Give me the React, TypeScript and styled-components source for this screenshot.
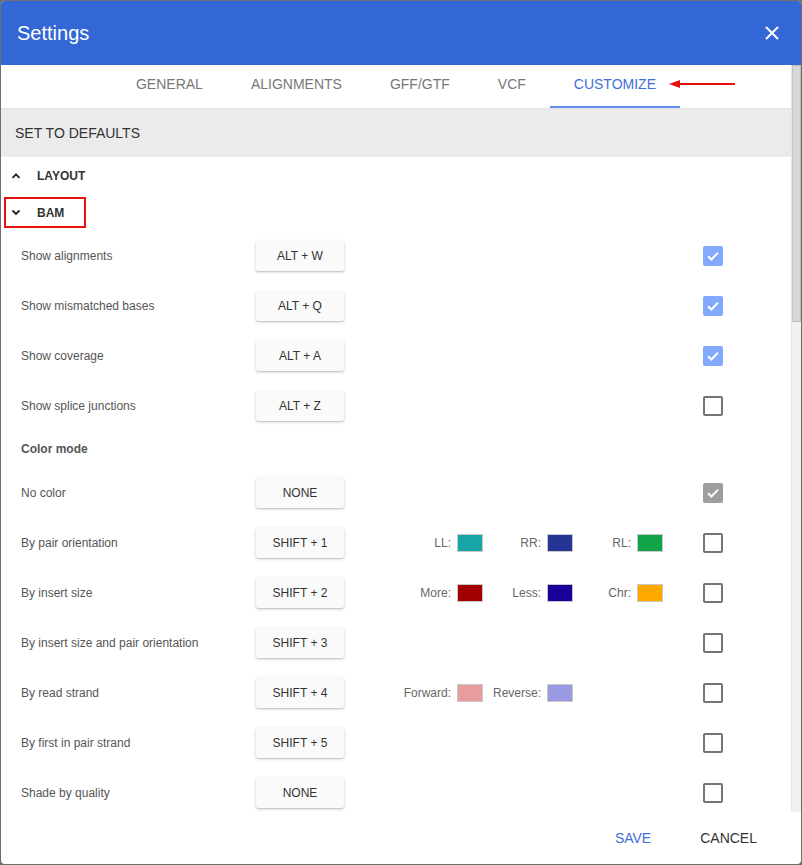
import React from "react";
import styled, { createGlobalStyle } from "styled-components";

const Global = createGlobalStyle`
  html, body { margin: 0; padding: 0; }
  body {
    background: #6e6e6e;
    font-family: "Liberation Sans", Arial, sans-serif;
    width: 802px;
    height: 865px;
    overflow: hidden;
  }
`;

const Dialog = styled.div`
  margin: 1px 0 0 1px;
  width: 800px;
  height: 863px;
  background: #fff;
  border-radius: 4px;
  overflow: hidden;
  display: flex;
  flex-direction: column;
  box-sizing: border-box;
`;

const Header = styled.div`
  height: 64px;
  flex: none;
  background: #3367d6;
  display: flex;
  align-items: center;
  justify-content: space-between;
  padding: 0 20px 0 16px;
  color: #fff;
`;

const Title = styled.div`
  font-size: 20px;
  line-height: 1;
`;

const CloseBtn = styled.button`
  border: 0;
  background: none;
  padding: 0;
  width: 18px;
  height: 18px;
  display: flex;
  align-items: center;
  justify-content: center;
`;

const Body = styled.div`
  flex: 1;
  min-height: 0;
  display: flex;
`;

const Content = styled.div`
  flex: 1;
  min-width: 0;
  overflow: hidden;
`;

const ScrollTrack = styled.div`
  width: 10px;
  flex: none;
  background: #f1f1f1;
  border-left: 1px solid #e6e6e6;
  box-sizing: border-box;
`;

const ScrollThumb = styled.div`
  height: 257px;
  background: #d7d7d7;
  border: 1px solid #bdbdbd;
  border-left-color: #c4c4c4;
  box-sizing: border-box;
`;

const Tabs = styled.div`
  height: 43px;
  border-bottom: 1px solid #e2e2e2;
  display: flex;
  justify-content: center;
`;

const Tab = styled.div<{ $active?: boolean }>`
  padding: 0 24px 5px;
  display: flex;
  align-items: center;
  font-size: 14px;
  color: ${(p) => (p.$active ? "#3f6fd8" : "#777")};
  box-shadow: ${(p) => (p.$active ? "inset 0 -2px 0 #5f90f2" : "none")};
  position: relative;
`;

const Arrow = styled.svg`
  position: absolute;
  left: 119px;
  top: 14px;
`;

const DefaultsBar = styled.div`
  height: 48px;
  background: #ebebeb;
  display: flex;
  align-items: center;
  padding-left: 14px;
  font-size: 14px;
  color: #333;
`;

const SectionHead = styled.div<{ $marked?: boolean }>`
  display: flex;
  align-items: center;
  height: ${(p) => (p.$marked ? "31px" : "37px")};
  margin: ${(p) => (p.$marked ? "3px 0 3px 3px" : "0")};
  width: ${(p) => (p.$marked ? "82px" : "auto")};
  padding-left: ${(p) => (p.$marked ? "5px" : "10px")};
  border: ${(p) => (p.$marked ? "2px solid #e8100f" : "0")};
  box-sizing: border-box;
  font-size: 12px;
  font-weight: bold;
  color: #333;
`;

const ChevronBox = styled.span`
  width: 26px;
  display: flex;
  align-items: center;
`;

const Row = styled.div`
  height: 50px;
  display: grid;
  grid-template-columns: 235px 88px 1fr 20px;
  align-items: center;
  padding: 0 68px 0 20px;
`;

const SubTitle = styled.div`
  height: 37px;
  display: flex;
  align-items: center;
  padding: 0 0 2px 20px;
  box-sizing: border-box;
  font-size: 12px;
  font-weight: bold;
  color: #555;
`;

const Label = styled.div`
  font-size: 12px;
  color: #555;
`;

const KeyButton = styled.div`
  height: 30px;
  background: #fafafa;
  border-radius: 2px;
  box-shadow: 0 1px 3px rgba(0, 0, 0, 0.22), 0 1px 1px rgba(0, 0, 0, 0.08);
  display: flex;
  align-items: center;
  justify-content: center;
  font-size: 12px;
  color: #333;
`;

const Swatches = styled.div<{ $pad: number }>`
  display: flex;
  justify-content: flex-end;
  padding-right: ${(p) => p.$pad}px;
`;

const SwatchGroup = styled.div`
  width: 90px;
  display: flex;
  justify-content: flex-end;
  align-items: center;
  gap: 6px;
  font-size: 12px;
  color: #666;
`;

const Swatch = styled.span<{ $c: string }>`
  width: 24px;
  height: 16px;
  background: ${(p) => p.$c};
  border: 1px solid #c8c8c8;
`;

const Check = styled.div<{ $state: "on" | "off" | "gray" }>`
  width: 20px;
  height: 20px;
  box-sizing: border-box;
  border-radius: 2px;
  background: ${(p) =>
    p.$state === "on" ? "#82a9fb" : p.$state === "gray" ? "#9e9e9e" : "transparent"};
  border: ${(p) => (p.$state === "off" ? "2px solid #757575" : "0")};
  display: flex;
  align-items: center;
  justify-content: center;
`;

const Footer = styled.div`
  height: 52px;
  flex: none;
  display: flex;
  justify-content: flex-end;
  align-items: center;
  gap: 17px;
  padding-right: 28px;
`;

const FooterBtn = styled.button<{ $primary?: boolean }>`
  border: 0;
  background: none;
  font-family: inherit;
  font-size: 14px;
  padding: 8px 16px;
  color: ${(p) => (p.$primary ? "#3f6fd8" : "#333")};
`;

const Tick = () => (
  <svg width="14" height="14" viewBox="0 0 14 14">
    <path d="M2 7.3 L5.4 10.5 L12 3.6" fill="none" stroke="#fff" strokeWidth="2" />
  </svg>
);

const Chevron = ({ up }: { up?: boolean }) => (
  <svg width="10" height="7" viewBox="0 0 10 7">
    <path
      d={up ? "M1.5 5.8 L5 2.3 L8.5 5.8" : "M1.5 1.5 L5 5 L8.5 1.5"}
      fill="none"
      stroke="#222"
      strokeWidth="1.8"
    />
  </svg>
);

type Sw = { label: string; color: string };
type RowData = {
  label: string;
  key: string;
  state: "on" | "off" | "gray";
  sw?: Sw[];
  pad?: number;
};

const top: RowData[] = [
  { label: "Show alignments", key: "ALT + W", state: "on" },
  { label: "Show mismatched bases", key: "ALT + Q", state: "on" },
  { label: "Show coverage", key: "ALT + A", state: "on" },
  { label: "Show splice junctions", key: "ALT + Z", state: "off" },
];

const colorRows: RowData[] = [
  { label: "No color", key: "NONE", state: "gray" },
  {
    label: "By pair orientation",
    key: "SHIFT + 1",
    state: "off",
    sw: [
      { label: "LL:", color: "#17a5a5" },
      { label: "RR:", color: "#263593" },
      { label: "RL:", color: "#11a548" },
    ],
  },
  {
    label: "By insert size",
    key: "SHIFT + 2",
    state: "off",
    sw: [
      { label: "More:", color: "#a10000" },
      { label: "Less:", color: "#17009b" },
      { label: "Chr:", color: "#ffa800" },
    ],
  },
  { label: "By insert size and pair orientation", key: "SHIFT + 3", state: "off" },
  {
    label: "By read strand",
    key: "SHIFT + 4",
    state: "off",
    sw: [
      { label: "Forward:", color: "#e89c9c" },
      { label: "Reverse:", color: "#9a9ae3" },
    ],
    pad: 130,
  },
  { label: "By first in pair strand", key: "SHIFT + 5", state: "off" },
  { label: "Shade by quality", key: "NONE", state: "off" },
];

const SettingRow = ({ r }: { r: RowData }) => (
  <Row>
    <Label>{r.label}</Label>
    <KeyButton>{r.key}</KeyButton>
    <Swatches $pad={r.pad ?? 40}>
      {r.sw?.map((s) => (
        <SwatchGroup key={s.label}>
          {s.label}
          <Swatch $c={s.color} />
        </SwatchGroup>
      ))}
    </Swatches>
    <Check $state={r.state}>{r.state !== "off" && <Tick />}</Check>
  </Row>
);

export default function App() {
  return (
    <>
      <Global />
      <Dialog>
        <Header>
          <Title>Settings</Title>
          <CloseBtn>
            <svg width="14" height="14" viewBox="0 0 14 14">
              <path d="M1 1 L13 13 M13 1 L1 13" stroke="#fff" strokeWidth="2" />
            </svg>
          </CloseBtn>
        </Header>
        <Body>
          <Content>
            <Tabs>
              <Tab>GENERAL</Tab>
              <Tab>ALIGNMENTS</Tab>
              <Tab>GFF/GTF</Tab>
              <Tab>VCF</Tab>
              <Tab $active>
                CUSTOMIZE
                <Arrow width="66" height="10" viewBox="0 0 66 10">
                  <path d="M8 5 L66 5" stroke="#e8100f" strokeWidth="2" />
                  <path d="M0 5 L11 1 L11 9 Z" fill="#e8100f" />
                </Arrow>
              </Tab>
            </Tabs>
            <DefaultsBar>SET TO DEFAULTS</DefaultsBar>
            <SectionHead>
              <ChevronBox>
                <Chevron up />
              </ChevronBox>
              LAYOUT
            </SectionHead>
            <SectionHead $marked>
              <ChevronBox>
                <Chevron />
              </ChevronBox>
              BAM
            </SectionHead>
            {top.map((r) => (
              <SettingRow key={r.label} r={r} />
            ))}
            <SubTitle>Color mode</SubTitle>
            {colorRows.map((r) => (
              <SettingRow key={r.label} r={r} />
            ))}
          </Content>
          <ScrollTrack>
            <ScrollThumb />
          </ScrollTrack>
        </Body>
        <Footer>
          <FooterBtn $primary>SAVE</FooterBtn>
          <FooterBtn>CANCEL</FooterBtn>
        </Footer>
      </Dialog>
    </>
  );
}
